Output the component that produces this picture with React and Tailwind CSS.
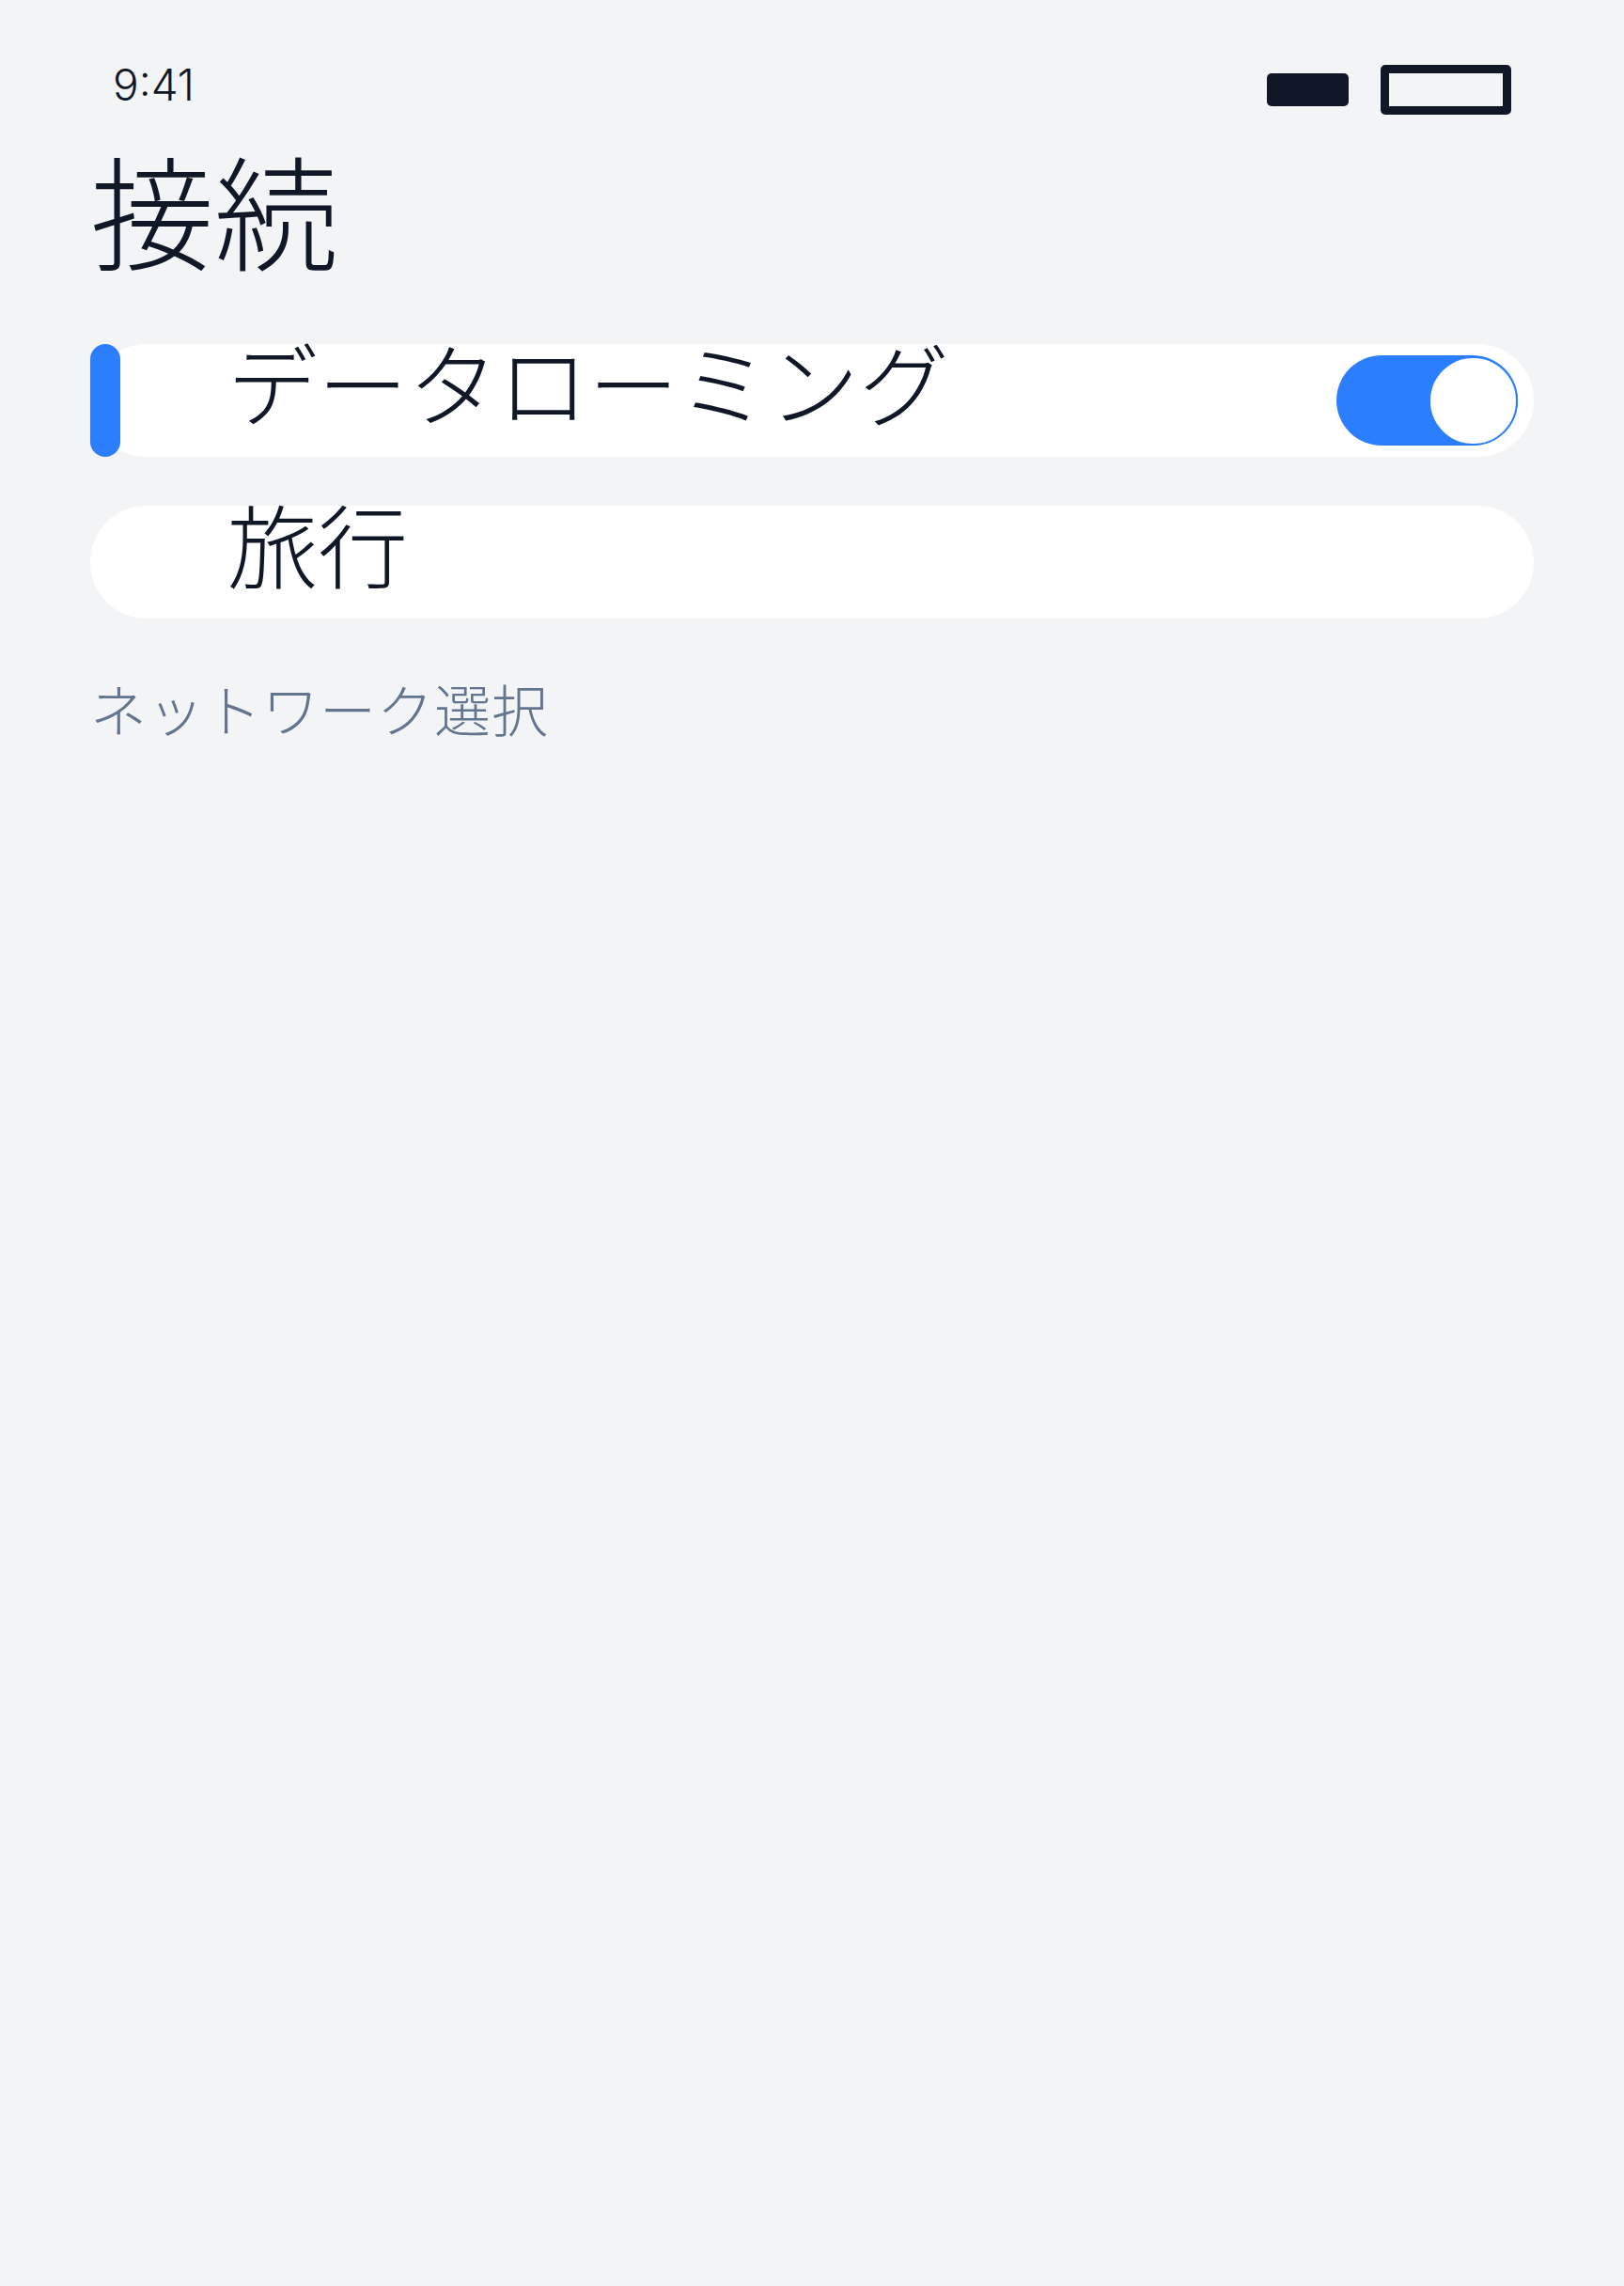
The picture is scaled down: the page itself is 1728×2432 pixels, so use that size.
const Toggle = ({ on }) => {
  return (
    <div
      className={`relative w-[193px] h-[96px] rounded-full flex items-center ${on ? 'bg-blue-500 justify-end' : 'bg-gray-300 justify-start'}`}
    >
      <div className="w-[95px] h-[95px] rounded-full bg-white border-2 border-blue-500"></div>
    </div>
  );
};

const SettingRow = ({ label, active, toggle }) => {
  return (
    <div className="relative h-[120px] rounded-full bg-white flex items-center justify-between pl-[146px] pr-[17px]">
      {active && <div className="absolute left-0 top-0 h-full w-[32px] rounded-full bg-blue-500"></div>}
      <span className="text-[96px] leading-none text-gray-900 mb-[30px]">{label}</span>
      {toggle !== undefined && <Toggle on={toggle} />}
    </div>
  );
};

export default function App() {
  return (
    <div className="min-h-screen bg-gray-100 font-[Inter,'Noto_Sans_CJK_JP',sans-serif] font-light text-gray-900">
      <div className="flex justify-between items-start px-[120px] pt-[67px]">
        <span className="text-[46px] leading-none">9:41</span>
        <div className="flex items-center gap-[34px] mt-[2px]">
          <div className="w-[87px] h-[35px] rounded-[5px] bg-gray-900"></div>
          <div className="w-[139px] h-[53px] rounded-[5px] border-[9px] border-gray-900"></div>
        </div>
      </div>

      <div className="px-[96px]">
        <h1 className="mt-[42px] text-[132px] leading-none font-light">接続</h1>

        <div className="mt-[70px] flex flex-col gap-[52px]">
          <SettingRow label="データローミング" active toggle={true} />
          <SettingRow label="旅行" />
        </div>

        <p className="mt-[69px] text-6xl leading-none tracking-[1px] text-slate-500">ネットワーク選択</p>
      </div>
    </div>
  );
}
